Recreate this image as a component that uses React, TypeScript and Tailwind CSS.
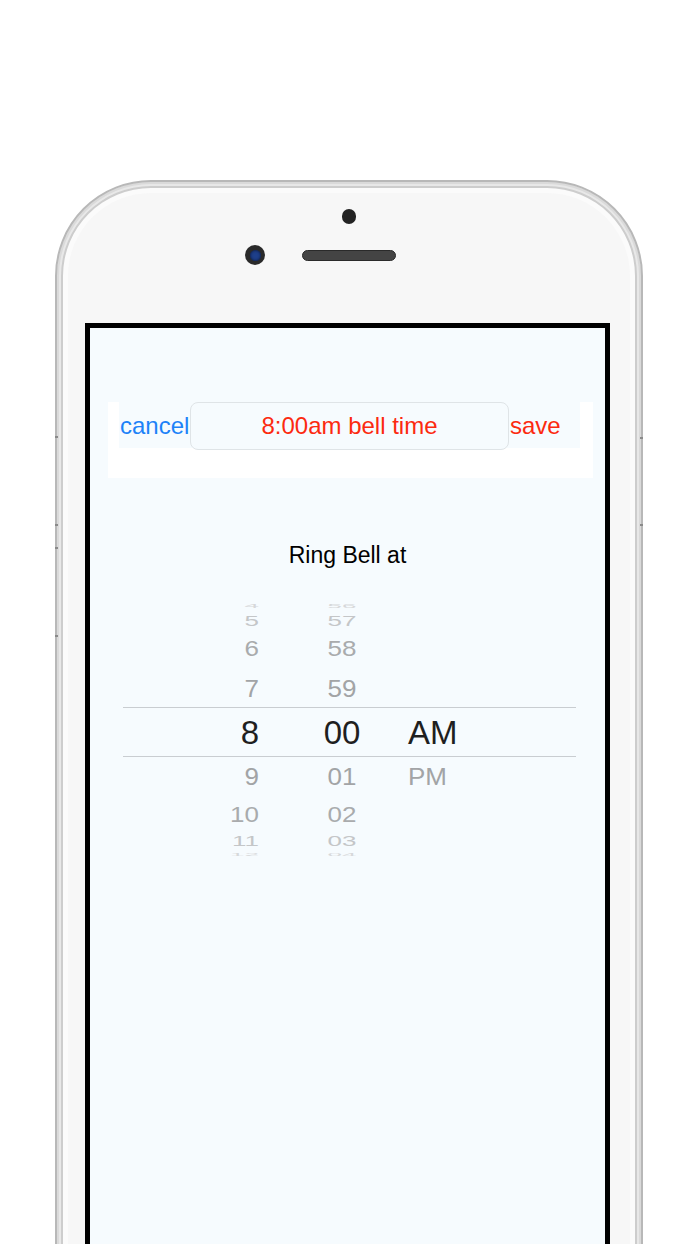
import React from "react";

type Row = {
  hour: string;
  minute: string;
  period: string;
  height: string;
  scale: string;
  color: string;
  size: string;
  selected?: boolean;
};

const rows: Row[] = [
  { hour: "4", minute: "56", period: "", height: "h-[10px]", scale: "scale-y-[0.18]", color: "text-[#d6d8da]", size: "text-[26px]" },
  { hour: "5", minute: "57", period: "", height: "h-[19px]", scale: "scale-y-[0.58]", color: "text-[#c4c6c8]", size: "text-[26px]" },
  { hour: "6", minute: "58", period: "", height: "h-[38px]", scale: "scale-y-[0.82]", color: "text-[#a9abad]", size: "text-[26px]" },
  { hour: "7", minute: "59", period: "", height: "h-[39px]", scale: "scale-y-[0.95]", color: "text-[#a2a4a6]", size: "text-[26px]" },
  { hour: "8", minute: "00", period: "AM", height: "h-[50px]", scale: "scale-y-100", color: "text-[#1f1f1f]", size: "text-[33px]", selected: true },
  { hour: "9", minute: "01", period: "PM", height: "h-[38px]", scale: "scale-y-[0.95]", color: "text-[#a2a4a6]", size: "text-[26px]" },
  { hour: "10", minute: "02", period: "", height: "h-[37px]", scale: "scale-y-[0.84]", color: "text-[#a9abad]", size: "text-[26px]" },
  { hour: "11", minute: "03", period: "", height: "h-[18px]", scale: "scale-y-[0.55]", color: "text-[#c4c6c8]", size: "text-[26px]" },
  { hour: "12", minute: "04", period: "", height: "h-[10px]", scale: "scale-y-[0.16]", color: "text-[#d6d8da]", size: "text-[26px]" },
];

function Picker() {
  return (
    <div className="ml-[33px] mr-[29px] mt-[32px] flex flex-col">
      {rows.map((r) => (
        <div
          key={r.hour}
          className={`flex items-center ${r.height} ${r.color} ${r.size} ${
            r.selected ? "border-y border-[#c9cdd1]" : ""
          }`}
        >
          <div className={`w-[136px] text-right leading-none ${r.scale}`}>{r.hour}</div>
          <div className={`ml-[53px] w-[60px] text-center leading-none ${r.scale}`}>{r.minute}</div>
          <div className={`ml-[36px] leading-none ${r.scale}`}>{r.period}</div>
        </div>
      ))}
    </div>
  );
}

export default function App() {
  return (
    <div
      className="relative h-[1244px] w-[700px] overflow-hidden bg-white pt-[180px] pl-[55px]"
      style={{ fontFamily: '"Liberation Sans", Arial, sans-serif' }}
    >
      {/* Phone body */}
      <div className="h-[1120px] w-[588px] rounded-t-[96px] border-[2px] border-[#b8b8b8] bg-[#f7f7f7] shadow-[inset_0_0_0_2px_#dadada,inset_0_0_0_4px_#e8e8e8,inset_0_0_0_6px_#cdcdcd,inset_0_0_0_11px_#fbfbfb]">
        {/* Sensor */}
        <div className="mx-auto mt-[27px] h-[15px] w-[14px] rounded-full bg-[#232323]" />

        {/* Camera + speaker */}
        <div className="mt-[21px] flex items-center justify-center">
          <div className="flex h-[20px] w-[20px] items-center justify-center rounded-full bg-[#2a2a2a]">
            <div className="h-[11px] w-[11px] rounded-full bg-[#1e3f8a] shadow-[inset_0_0_3px_#0a1530]" />
          </div>
          <div className="ml-[37px] h-[11px] w-[94px] rounded-full border border-[#2a2a2a] bg-[#444]" />
          <div className="w-[57px]" />
        </div>

        {/* Screen */}
        <div className="ml-[28px] mt-[58px] h-[960px] w-[525px] border-[5px] border-black bg-[#f6fbfe]">
          {/* Top bar */}
          <div className="ml-[18px] mr-[12px] mt-[74px] h-[76px] bg-white">
            <div className="ml-[11px] mr-[13px] flex h-[46px] items-start bg-[#f6fbfe]">
              <span className="flex h-[48px] w-[71px] items-center pl-[1px] text-[24px] text-[#1d82f8]">cancel</span>
              <div className="flex h-[48px] w-[319px] items-center justify-center rounded-[8px] border border-[#dfe4e7] bg-[#f6fbfe] text-[24px] text-[#fc2a10]">
                8:00am bell time
              </div>
              <span className="flex h-[48px] items-center pl-[1px] text-[24px] text-[#fc2a10]">save</span>
            </div>
          </div>

          {/* Label */}
          <div className="mt-[63px] text-center text-[23px] leading-[28px] text-black">Ring Bell at</div>

          <Picker />
        </div>
      </div>

      {/* Side button edges */}
      <div className="absolute left-[55px] top-[436px] h-[2px] w-[3px] bg-[#8a8a8a]" />
      <div className="absolute left-[55px] top-[524px] h-[2px] w-[3px] bg-[#8a8a8a]" />
      <div className="absolute left-[55px] top-[547px] h-[2px] w-[3px] bg-[#8a8a8a]" />
      <div className="absolute left-[55px] top-[635px] h-[2px] w-[3px] bg-[#8a8a8a]" />
      <div className="absolute left-[640px] top-[437px] h-[2px] w-[3px] bg-[#8a8a8a]" />
      <div className="absolute left-[640px] top-[524px] h-[2px] w-[3px] bg-[#8a8a8a]" />
    </div>
  );
}
